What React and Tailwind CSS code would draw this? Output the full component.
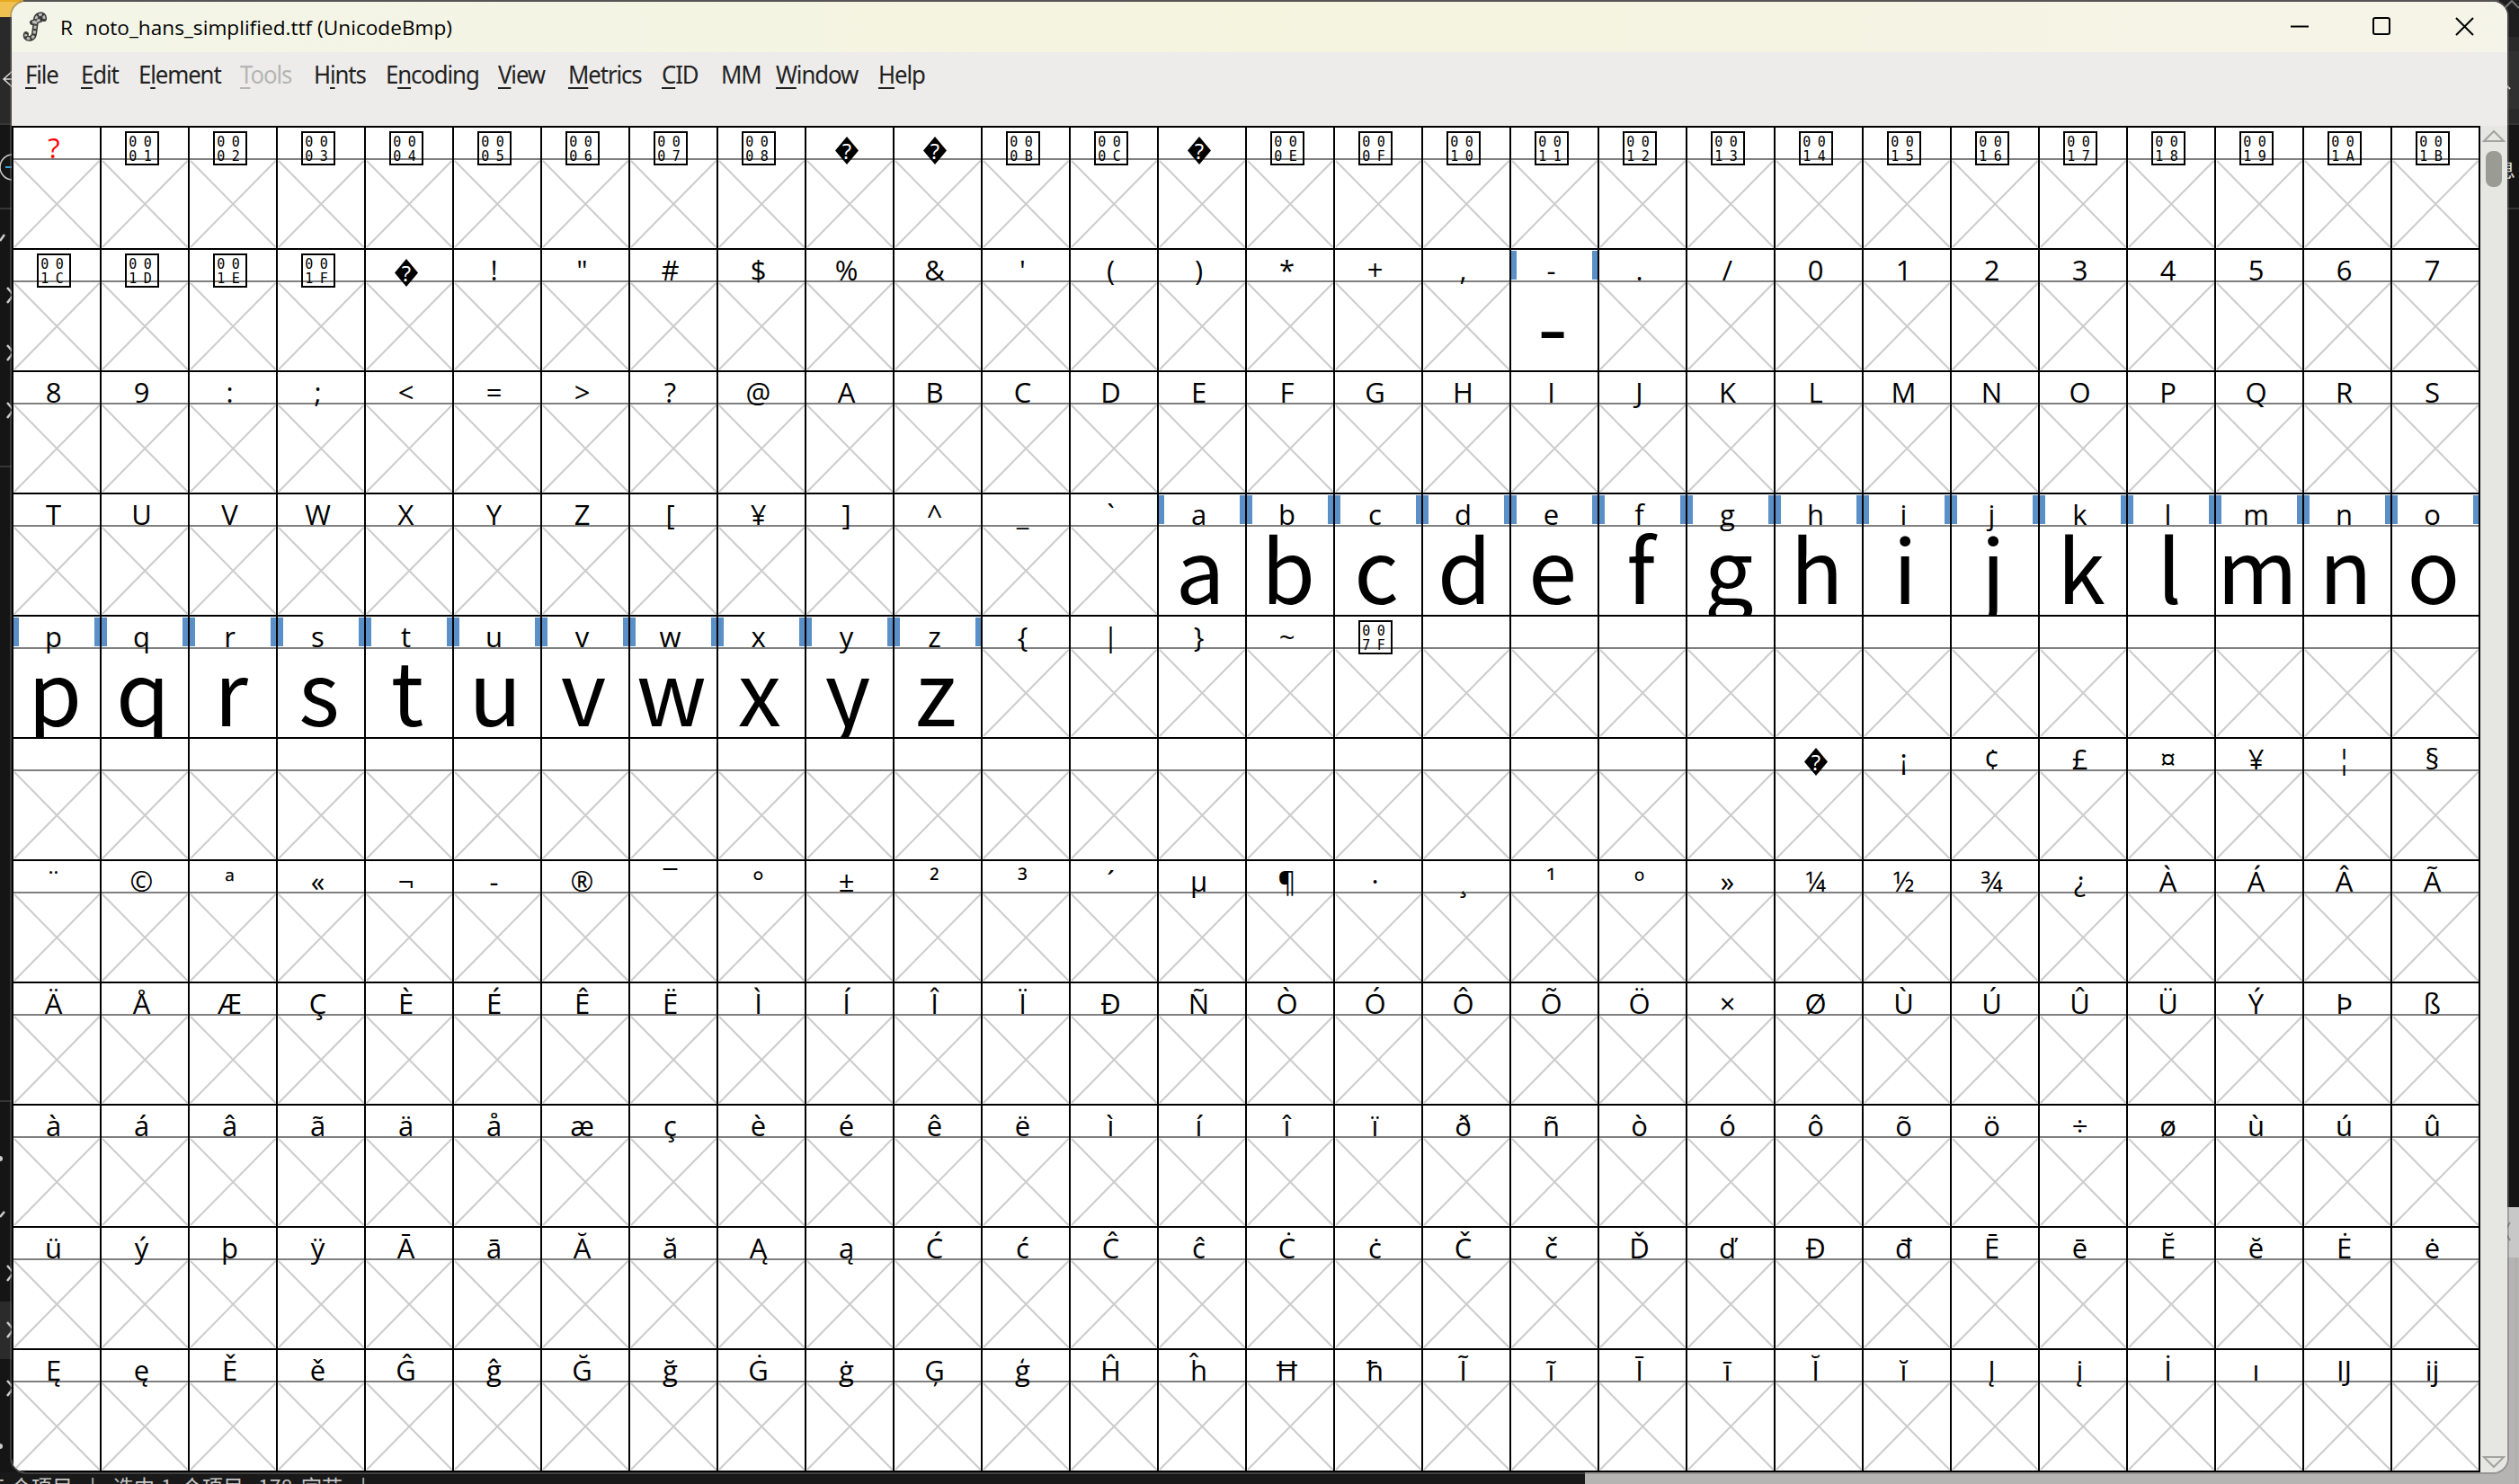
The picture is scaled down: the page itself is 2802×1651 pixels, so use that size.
const BLANK_MARKS = new Set([9, 10, 13, 32, 160]);

const MENU = [
  ["", "F", "ile", "w-[62px]"],
  ["", "E", "dit", "w-[64px]"],
  ["E", "l", "ement", "w-[113px]"],
  ["", "T", "ools", "w-[82px]"],
  ["H", "i", "nts", "w-[80px]"],
  ["E", "n", "coding", "w-[125px]"],
  ["", "V", "iew", "w-[78px]"],
  ["", "M", "etrics", "w-[104px]"],
  ["", "C", "ID", "w-[66px]"],
  ["MM", "", "", "w-[61px]"],
  ["", "W", "indow", "w-[114px]"],
  ["", "H", "elp", "w-[80px]"],
];

function UnknownMark() {
  return (
    <svg className="absolute left-[32px] top-[10px] h-[31px] w-[26px]" viewBox="0 0 26 31">
      <path d="M13 0 26 15.5 13 31 0 15.5Z" fill="#000" />
      <text x="13" y="24.500" textAnchor="middle" fill="#fff" className="font-['Open_Sans'] text-[24px]">?</text>
    </svg>
  );
}

function HexBox({ code }) {
  const h = code.toString(16).toUpperCase().padStart(4, "0");
  return (
    <span className="absolute left-[26px] top-[4px] h-[38px] w-[38px] border-2 border-black pt-[2px] font-['DejaVu_Sans_Mono',monospace] text-[15px] leading-[16px]">
      <span className="-ml-[1.500px] grid grid-cols-[16.500px_16.500px] text-center">
        {h.split("").map((d, i) => (
          <span key={i}>{d}</span>
        ))}
      </span>
    </span>
  );
}

function Label({ code }) {
  if (code === 0)
    return <span className="absolute left-0 top-[4px] w-[90px] text-center text-[31px] leading-[36px] text-[#ff0000]">?</span>;
  if (BLANK_MARKS.has(code)) return <UnknownMark />;
  if (code > 127 && code < 160) return null;
  if (code < 32 || code === 127) return <HexBox code={code} />;
  const ch = code === 92 ? "¥" : code === 173 ? "-" : String.fromCharCode(code);
  return <span className="absolute left-0 top-[4px] w-[89px] text-center text-[31px] leading-[36px]">{ch}</span>;
}

function Cell({ code }) {
  const filled = code === 45 || (code >= 97 && code <= 122);
  return (
    <div className="relative h-[136px] border-l-2 border-t-2 border-black">
      <div className="flex h-[34px] justify-between pt-px">
        {filled && <i className="h-[32px] w-[6px] bg-[#5a8fc8]" />}
        {filled && <i className="h-[32px] w-[6px] bg-[#5a8fc8]" />}
      </div>
      <div className="h-[2px] bg-[#808080]" />
      {filled ? (
        <div className="h-[98px] overflow-hidden pr-[4px] text-center font-['Noto_Sans_CJK_SC',sans-serif] text-[97px] leading-[87px]">
          <span className="-mx-4">{String.fromCharCode(code)}</span>
        </div>
      ) : (
        <svg className="block h-[98px] w-[96px]" viewBox="0 0 96 98">
          <path d="M1 1 95.500 97M95.500 1 1 97" stroke="#cccccc" strokeWidth="2" fill="none" />
        </svg>
      )}
      <Label code={code} />
    </div>
  );
}

function Desktop() {
  return (
    <div className="absolute inset-0 bg-[#151515]">
      <svg className="block h-[1651px] w-[2802px]" viewBox="0 0 2802 1651" fill="none">
        <rect width="2802" height="137" fill="#292929" />
        <rect width="2802" height="4" fill="#433f40" />
        <rect width="26" height="19" fill="#f0c050" />
        <rect width="26" height="2" fill="#e9a820" />
        <path d="M0 138H14M0 232H14M0 519H14M0 1225H14" stroke="#363636" strokeWidth="2" />
        <rect y="1448" width="14" height="64" fill="#2b2b2b" />
        <path d="M14 79 4 88 14 97M4 88H14" stroke="#ddd" strokeWidth="1.500" />
        <circle cx="14" cy="186" r="14" stroke="#ccc" strokeWidth="1.500" />
        <path d="M6 186H14" stroke="#38a7e0" strokeWidth="2" />
        <g stroke="#ccc" strokeWidth="2.500">
          <path d="M0 268 5 261M0 1354 5 1348" />
          <path d="M8 320 15 328 8 337M8 384 15 392 8 401M8 448 15 456 8 465M8 1408 15 1416 8 1425M8 1471 15 1479 8 1488M8 1536 15 1544 8 1553" />
        </g>
        <circle cx="0" cy="1289" r="3" fill="#ccc" />
        <circle cx="0" cy="1609" r="3" fill="#ccc" />
        <rect x="2780" width="22" height="41" fill="#1e1e1e" />
        <rect x="2780" y="41" width="22" height="16" fill="#292929" />
        <rect x="2780" y="57" width="22" height="64" fill="#303030" />
        <path d="M2786 9 2794 1 2802 9" stroke="#777" strokeWidth="2" />
        <path d="M2780 138H2802M2780 232H2802" stroke="#333" strokeWidth="2" />
        <path d="M2786 93 2792 99" stroke="#ddd" strokeWidth="2" />
        <rect y="1638" width="1763" height="13" fill="#191919" />
        <path d="M1763 1638H2770V1343H2802V1651H1763Z" fill="#b5b4b2" />
        <rect x="2780" y="1343" width="22" height="56" fill="#c8c8c8" />
        <path d="M2799 1400V1651" stroke="#aaa9a7" strokeWidth="1" />
        <path d="M2792 1360 2786 1370 2792 1380" stroke="#888" strokeWidth="2" />
      </svg>
      <span className="absolute left-[2776px] top-[172px] font-['Noto_Sans_CJK_SC'] text-[22px] leading-[30px] text-[#ddd]">息</span>
      <div className="absolute left-[-7px] top-[1637px] flex whitespace-pre font-['Noto_Sans_CJK_SC'] text-[23px] leading-[32px] text-[#c4c4c4]">
        <span className="w-[19px]">5</span>
        <span className="w-[88px]">个项目</span>
        <span className="w-[26px]">|</span>
        <span className="w-[53px]">选中</span>
        <span className="w-[23px]">1</span>
        <span className="w-[85px]">个项目</span>
        <span className="w-[48px]">178</span>
        <span className="w-[66px]">字节</span>
        <span>|</span>
      </div>
    </div>
  );
}

function TitleBar() {
  return (
    <div className="flex h-[56px] items-center bg-linear-to-r from-[#f3f5e8] via-[#f5f4df] to-[#f5f4e8]">
      <svg className="ml-[12px] h-[34px] w-[30px]" viewBox="0 0 30 34" fill="none" strokeLinecap="round" strokeLinejoin="round">
        <path d="M24 8C25 1 14 2 15 10L13 25C12 32 2 31 4 25M11 12 20 9M24 8 21 7" stroke="#3a3a3a" strokeWidth="6" />
        <path d="M24 8C25 1 14 2 15 10L13 25C12 32 2 31 4 25M11 12 20 9" stroke="#bcbcb6" strokeWidth="3" strokeDasharray="3.500 2" strokeLinecap="butt" />
      </svg>
      <span className="ml-[12px] whitespace-pre pt-px text-[22.600px] leading-[30px] tracking-[0.020px] text-black">
        {"R  "}
        <span className="ml-[2px]">noto_hans_simplified.ttf (UnicodeBmp)</span>
      </span>
      <svg className="ml-auto mr-[36px] h-[22px] w-[206px]" viewBox="0 0 206 22" fill="none" stroke="#000" strokeWidth="2">
        <path d="M1 10.500H21" />
        <rect x="93" y="1" width="18" height="18" rx="2" />
        <path d="M185 1 204 20M204 1 185 20" />
      </svg>
    </div>
  );
}

function MenuBar() {
  return (
    <div className="flex h-[82px] pl-[15px] pt-[5px] font-['Noto_Sans',sans-serif] text-[28px] leading-[38px] tracking-[-1.200px] text-[#222]">
      {MENU.map(([a, key, b, width]) => (
        <div key={a + key + b} className={key === "T" ? width + " text-[#b5b5b3]" : width}>
          <span className="inline-block origin-left scale-x-[0.920] whitespace-nowrap">
            {a}
            <span className="underline decoration-2 underline-offset-[4px]">{key}</span>
            {b}
          </span>
        </div>
      ))}
    </div>
  );
}

function ScrollBar() {
  return (
    <div className="flex w-[30px] flex-col items-center bg-[#e6e7e3] pb-[4px] pt-[4px]">
      <svg className="h-[15px] w-[26px]" viewBox="0 0 26 15" fill="none" stroke="#a3a49f" strokeWidth="2">
        <path d="M2 13 13 2 24 13Z" />
      </svg>
      <div className="mt-[9px] h-[40px] w-[18px] rounded-[8px] bg-[#9a9b95]" />
      <svg className="mt-auto h-[15px] w-[26px]" viewBox="0 0 26 15" fill="none" stroke="#a3a49f" strokeWidth="2">
        <path d="M2 2 13 13 24 2Z" />
      </svg>
    </div>
  );
}

export default function App() {
  return (
    <div className="relative h-[1651px] w-[2802px] overflow-hidden font-['Open_Sans','Noto_Sans',sans-serif] text-black">
      <Desktop />
      <div className="absolute left-[13px] top-[2px] h-[1636px] w-[2776px] overflow-hidden rounded-[16px] bg-[#edecea] shadow-[0_0_0_2px_rgba(110,110,110,0.450)]">
        <TitleBar />
        <MenuBar />
        <div className="flex">
          <div className="grid w-[2746px] grid-cols-[repeat(28,98px)] border-b-2 border-r-2 border-black bg-white">
            {Array.from({ length: 308 }, (_, i) => (
              <Cell key={i} code={i} />
            ))}
          </div>
          <ScrollBar />
        </div>
      </div>
    </div>
  );
}
